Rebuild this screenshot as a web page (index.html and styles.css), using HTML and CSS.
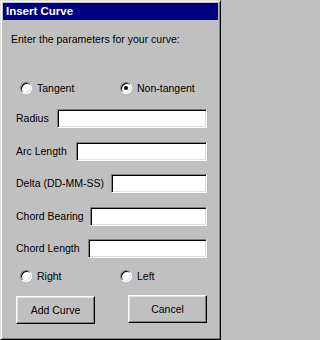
FILE: index.html
```html
<!DOCTYPE html>
<html>
<head>
<meta charset="utf-8">
<title>Insert Curve</title>
<link rel="stylesheet" href="styles.css">
</head>
<body>
<div class="window">
  <div class="titlebar">Insert Curve</div>
  <div class="content">
    <p class="intro">Enter the parameters for your curve:</p>
    <div class="radios radios-top">
      <label class="option"><span class="radio"></span><span>Tangent</span></label>
      <label class="option"><span class="radio"><span class="dot"></span></span><span>Non-tangent</span></label>
    </div>
    <div class="fields">
      <div class="row"><span class="lbl">Radius</span><input class="field w-radius" type="text"></div>
      <div class="row gap14"><span class="lbl">Arc Length</span><input class="field w-arc" type="text"></div>
      <div class="row gap13"><span class="lbl">Delta (DD-MM-SS)</span><input class="field w-delta" type="text"></div>
      <div class="row gap14"><span class="lbl">Chord Bearing</span><input class="field w-bearing" type="text"></div>
      <div class="row gap13"><span class="lbl">Chord Length</span><input class="field w-length" type="text"></div>
    </div>
    <div class="radios radios-bottom">
      <label class="option"><span class="radio"></span><span>Right</span></label>
      <label class="option"><span class="radio"></span><span>Left</span></label>
    </div>
    <div class="buttons">
      <button class="btn btn-add">Add Curve</button>
      <button class="btn">Cancel</button>
    </div>
  </div>
</div>
</body>
</html>
```

FILE: styles.css
```css
html, body {
  margin: 0;
  padding: 0;
  background: #c0c0c0;
}
body {
  font-family: "Liberation Sans", Arial, sans-serif;
  font-size: 10.5px;
  color: #000;
}
.window {
  width: 221px;
  height: 340px;
  box-sizing: border-box;
  background: #c0c0c0;
  border: 1px solid;
  border-color: #dfdfdf #000 #000 #dfdfdf;
  box-shadow: inset 1px 1px #fff, inset -1px -1px #808080;
  padding: 2px;
}
.titlebar {
  height: 17px;
  line-height: 17px;
  background: #000080;
  color: #fff;
  font-weight: bold;
  font-size: 11.5px;
  padding-left: 3px;
}
.content {
  padding: 0 11px 0 8px;
}
.intro {
  margin: 13px 0 0 0;
  line-height: 13px;
  white-space: nowrap;
}
.radios {
  display: grid;
  grid-template-columns: 100px 100px;
  margin-left: 9px;
  height: 12px;
}
.radios-top { margin-top: 36px; }
.radios-bottom { margin-top: 12px; }
.option {
  display: flex;
  align-items: center;
  gap: 5px;
  height: 12px;
  line-height: 12px;
  white-space: nowrap;
}
.radio {
  width: 12px;
  height: 12px;
  box-sizing: border-box;
  border-radius: 50%;
  border: 1px solid;
  border-color: #808080 #fff #fff #808080;
  box-shadow: inset 1px 1px #000, inset -1px -1px #dfdfdf;
  background: #fff;
  display: flex;
  align-items: center;
  justify-content: center;
  flex: none;
}
.dot {
  width: 4px;
  height: 4px;
  border-radius: 50%;
  background: #000;
}
.fields {
  margin-top: 15px;
  padding-left: 5px;
}
.row {
  display: flex;
  align-items: center;
  height: 19px;
}
.gap14 { margin-top: 14px; }
.gap13 { margin-top: 13px; }
.lbl {
  white-space: nowrap;
  line-height: 13px;
}
.field {
  margin: 0 0 0 auto;
  padding: 0 3px;
  height: 19px;
  box-sizing: border-box;
  background: #fff;
  border: 1px solid;
  border-color: #808080 #fff #fff #808080;
  box-shadow: inset 1px 1px #000, inset -1px -1px #dfdfdf;
  outline: none;
  font: inherit;
}
.w-radius { width: 150px; }
.w-arc { width: 131px; }
.w-delta { width: 96px; }
.w-bearing { width: 117px; }
.w-length { width: 119px; }
.buttons {
  display: flex;
  justify-content: space-between;
  align-items: flex-start;
  margin-top: 13px;
  padding-left: 5px;
}
.btn {
  width: 79px;
  height: 28px;
  box-sizing: border-box;
  margin: 0;
  padding: 0;
  background: #c0c0c0;
  border: 1px solid;
  border-color: #fff #000 #000 #fff;
  box-shadow: inset -1px -1px #808080, inset 1px 1px #dfdfdf;
  font: inherit;
  color: #000;
}
.btn-add { margin-top: 1px; }
```
